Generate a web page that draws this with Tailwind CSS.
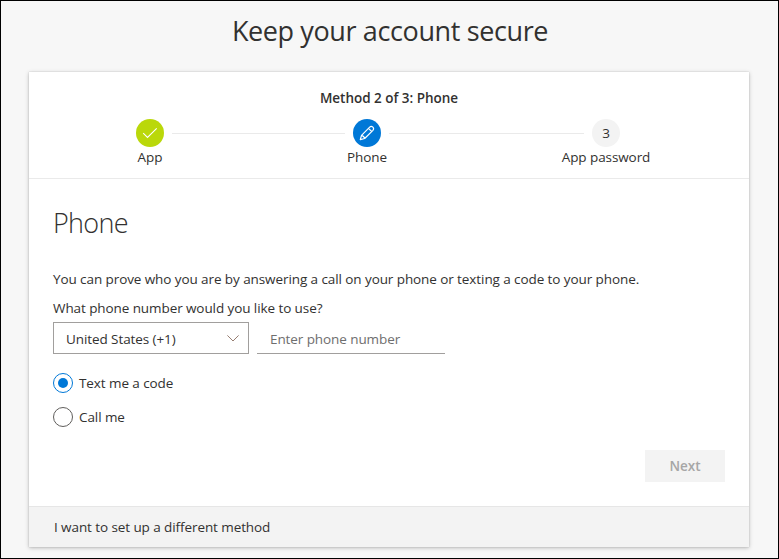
<!DOCTYPE html>
<html lang="en">
<head>
<meta charset="utf-8">
<title>Keep your account secure</title>
<script src="https://cdn.jsdelivr.net/npm/@tailwindcss/browser@4"></script>
</head>
<body class="box-border flex h-[559px] w-[779px] flex-col overflow-hidden border border-black bg-[#f7f7f7] pl-7 font-['Open_Sans','Noto_Sans',sans-serif] text-[13.5px] leading-5 tracking-[-0.085px] text-[#323130]">
  <h1 class="mt-[10px] h-[61px] w-[722px] text-center text-[27px] leading-10 tracking-[-0.38px] whitespace-nowrap"><span>Keep your account secure</span></h1>

  <main class="flex h-[475px] w-[720px] flex-col bg-white shadow-[0_1px_4px_rgba(0,0,0,0.25),0_0_1px_rgba(0,0,0,0.2)]">
    <header class="h-[107px] border-b border-[#eaeaea] pt-4">
      <p class="text-center text-[13.5px] font-semibold tracking-[-0.02px]"><span>Method 2 of 3: Phone</span></p>
      <ol class="mt-[11px] flex gap-2 pl-[107px]">
        <li class="flex w-7 flex-col items-center">
          <span class="flex size-7 shrink-0 items-center justify-center rounded-full bg-[#bad80a]">
            <svg class="size-4" viewBox="0 0 16 16" fill="none" stroke="#fff" stroke-width="1.1"><path d="M1.2 8.2 5.5 12.4 14.7 3.4"/></svg>
          </span>
          <span class="whitespace-nowrap">App</span>
        </li>
        <li class="mt-[14px] h-px w-[173px] bg-[#eaeaea]"></li>
        <li class="flex w-7 flex-col items-center">
          <span class="flex size-7 shrink-0 items-center justify-center rounded-full bg-[#0078d7]">
            <svg class="size-4" viewBox="0 0 16 16" fill="none" stroke="#fff" stroke-width="1.2" stroke-linejoin="round"><path d="M1.3 14.7 2.5 10.3 10.7 2.1Q12.2.7 13.9 2.1 15.3 3.8 13.9 5.3L5.7 13.5ZM9.5 3.3 12.7 6.5M2.5 10.3Q5.1 10.9 5.7 13.5"/></svg>
          </span>
          <span class="whitespace-nowrap">Phone</span>
        </li>
        <li class="mt-[14px] h-px w-[195px] bg-[#eaeaea]"></li>
        <li class="flex w-7 flex-col items-center">
          <span class="flex size-7 shrink-0 items-center justify-center rounded-full bg-[#f3f3f3]">3</span>
          <span class="whitespace-nowrap">App password</span>
        </li>
      </ol>
    </header>

    <section class="flex h-[327px] flex-col px-6 pt-[26px]">
      <h2 class="h-16 text-[27px] leading-9 font-light tracking-[-0.7px]"><span>Phone</span></h2>
      <p class="whitespace-nowrap"><span>You can prove who you are by answering a call on your phone or texting a code to your phone.</span></p>
      <p class="mt-[9px] whitespace-nowrap"><span>What phone number would you like to use?</span></p>
      <div class="mt-1 flex gap-2">
        <div class="flex h-8 w-[196px] items-center justify-between border border-[#a19f9d] pr-[9px] pl-3">
          <span class="pt-0.5 whitespace-nowrap">United States (+1)</span>
          <svg class="h-[7px] w-3" viewBox="0 0 12 7" fill="none" stroke="#977e72"><path d="M.4.4 6 6 11.6.4"/></svg>
        </div>
        <div class="flex h-8 w-[188px] items-center border-b border-[#a19f9d] pl-[13px] text-[#6e6e6e]"><span class="pt-0.5 whitespace-nowrap">Enter phone number</span></div>
      </div>
      <div class="mt-[19px] flex items-center gap-[6px]">
        <span class="flex size-5 items-center justify-center rounded-full border border-[#0078d7]"><span class="size-[10px] rounded-full bg-[#0078d7]"></span></span>
        <span>Text me a code</span>
      </div>
      <div class="mt-[14px] flex items-center gap-[6px]">
        <span class="size-5 rounded-full border border-[#605e5c]"></span>
        <span>Call me</span>
      </div>
      <button class="mt-[23px] h-8 w-20 self-end bg-[#f3f3f3] text-[13.5px] font-semibold text-[#a6a6a6]">Next</button>
    </section>

    <footer class="flex h-[41px] items-center border-t border-[#e6e6e6] bg-[#f3f3f3] pl-[25px]"><span>I want to set up a different method</span></footer>
  </main>
</body>
</html>
